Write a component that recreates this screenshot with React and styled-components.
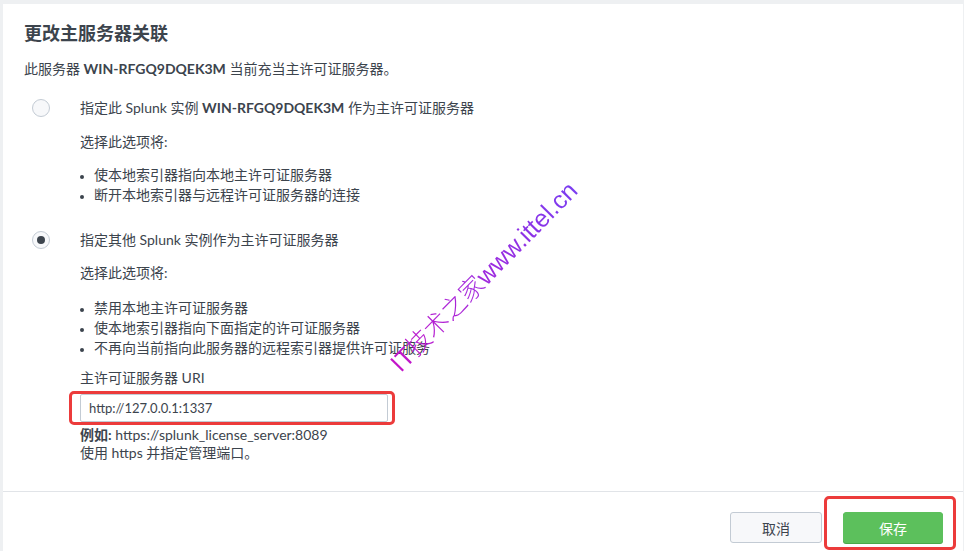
import React, { useState } from "react";
import styled, { createGlobalStyle } from "styled-components";

const GlobalStyle = createGlobalStyle`
  html, body {
    margin: 0;
    padding: 0;
    background: #eef0f2;
  }
  body {
    font-family: "Lato", "Noto Sans CJK SC", sans-serif;
    color: #3c444d;
  }
`;

const Page = styled.div`
  padding: 4px 1px 0 3px;
  height: 551px;
  box-sizing: border-box;
  overflow: hidden;
`;

const Dialog = styled.div`
  position: relative;
  background: #fff;
  height: 547px;
  display: flex;
  flex-direction: column;
`;

const Body = styled.div`
  padding: 17px 21px 0;
  height: 487px;
  box-sizing: border-box;
`;

const Title = styled.h2`
  margin: 0;
  font-size: 18px;
  line-height: 24px;
  font-weight: 700;
  color: #3c444d;
`;

const Text = styled.p`
  margin: ${(p) => p.$mt || 0}px 0 0;
  font-size: 14px;
  line-height: 20px;
  & b {
    font-weight: 700;
  }
`;

const Option = styled.div`
  display: flex;
  align-items: center;
  gap: 30px;
  margin: ${(p) => p.$mt}px 0 0 8px;
  font-size: 14px;
  line-height: 20px;
  & b {
    font-weight: 700;
  }
`;

const Radio = styled.span`
  width: 18px;
  height: 18px;
  box-sizing: border-box;
  border-radius: 50%;
  border: 1px solid #c3cbd4;
  background: #f7f8fa;
  display: flex;
  align-items: center;
  justify-content: center;
  cursor: pointer;
  &::after {
    content: "";
    width: 8px;
    height: 8px;
    border-radius: 50%;
    background: #3c444d;
    display: ${(p) => (p.$checked ? "block" : "none")};
  }
`;

const Indent = styled.div`
  margin-left: 56px;
`;

const List = styled.ul`
  margin: ${(p) => p.$mt}px 0 0;
  padding-left: 14px;
  font-size: 14px;
  line-height: 20px;
  & li::marker {
    font-size: 11px;
  }
`;

const Field = styled.label`
  display: block;
  margin-top: 10px;
  font-size: 14px;
  line-height: 20px;
`;

const Input = styled.input`
  display: block;
  margin-top: 6px;
  width: 308px;
  height: 28px;
  box-sizing: border-box;
  border: 1px solid #c3cbd4;
  border-radius: 2px;
  padding: 0 8px;
  font-family: "Lato", sans-serif;
  font-size: 13px;
  color: #3c444d;
  outline: none;
`;

const Help = styled.div`
  margin-top: 4px;
  font-size: 14px;
  line-height: 18px;
  & b {
    font-weight: 700;
  }
`;

const Footer = styled.div`
  border-top: 1px solid #e1e4e8;
  display: flex;
  justify-content: flex-end;
  gap: 21px;
  padding: 20px 20px 0;
`;

const Button = styled.button`
  width: ${(p) => (p.$primary ? 100 : 92)}px;
  height: 31px;
  border-radius: 3px;
  font-family: "Lato", "Noto Sans CJK SC", sans-serif;
  font-size: 14px;
  cursor: pointer;
  border: 1px solid ${(p) => (p.$primary ? "#5cc05c" : "#c3cbd4")};
  background: ${(p) => (p.$primary ? "#5cc05c" : "#f7f8fa")};
  color: ${(p) => (p.$primary ? "#fff" : "#3c444d")};
  box-shadow: ${(p) => (p.$primary ? "0 1px 0 #4aa84a" : "none")};
`;

const Mark = styled.div`
  position: absolute;
  left: ${(p) => p.$x}px;
  top: ${(p) => p.$y}px;
  width: ${(p) => p.$w}px;
  height: ${(p) => p.$h}px;
  border: 3px solid #ec3b3b;
  border-radius: 5px;
  box-sizing: border-box;
  pointer-events: none;
`;

const Watermark = styled.span`
  position: absolute;
  left: 479px;
  top: 271px;
  transform: translate(-50%, -50%) rotate(-45.5deg);
  white-space: nowrap;
  font-family: "Liberation Sans", "Noto Sans CJK SC", sans-serif;
  font-size: 25px;
  font-weight: 300;
  background: linear-gradient(90deg, #c414c8 0%, #a228dc 45%, #7a3cf0 100%);
  -webkit-background-clip: text;
  background-clip: text;
  color: transparent;
  pointer-events: none;
`;

export default function App() {
  const [choice, setChoice] = useState(2);
  const [uri, setUri] = useState("http://127.0.0.1:1337");

  return (
    <Page>
      <GlobalStyle />
      <Dialog>
        <Body>
          <Title>更改主服务器关联</Title>
          <Text $mt={14}>
            此服务器 <b>WIN-RFGQ9DQEK3M</b> 当前充当主许可证服务器。
          </Text>

          <Option $mt={19}>
            <Radio $checked={choice === 1} onClick={() => setChoice(1)} />
            <span>
              指定此 Splunk 实例 <b>WIN-RFGQ9DQEK3M</b> 作为主许可证服务器
            </span>
          </Option>
          <Indent>
            <Text $mt={14}>选择此选项将:</Text>
            <List $mt={13}>
              <li>使本地索引器指向本地主许可证服务器</li>
              <li>断开本地索引器与远程许可证服务器的连接</li>
            </List>
          </Indent>

          <Option $mt={25}>
            <Radio $checked={choice === 2} onClick={() => setChoice(2)} />
            <span>指定其他 Splunk 实例作为主许可证服务器</span>
          </Option>
          <Indent>
            <Text $mt={13}>选择此选项将:</Text>
            <List $mt={15}>
              <li>禁用本地主许可证服务器</li>
              <li>使本地索引器指向下面指定的许可证服务器</li>
              <li>不再向当前指向此服务器的远程索引器提供许可证服务</li>
            </List>
            <Field>主许可证服务器 URI</Field>
            <Input value={uri} onChange={(e) => setUri(e.target.value)} />
            <Help>
              <b>例如:</b> https://splunk_license_server:8089
              <br />
              使用 https 并指定管理端口。
            </Help>
          </Indent>
        </Body>

        <Footer>
          <Button>取消</Button>
          <Button $primary>保存</Button>
        </Footer>

        <Mark $x={66} $y={387} $w={326} $h={34} />
        <Mark $x={821} $y={492} $w={132} $h={54} />
        <Watermark>IT技术之家www.ittel.cn</Watermark>
      </Dialog>
    </Page>
  );
}
